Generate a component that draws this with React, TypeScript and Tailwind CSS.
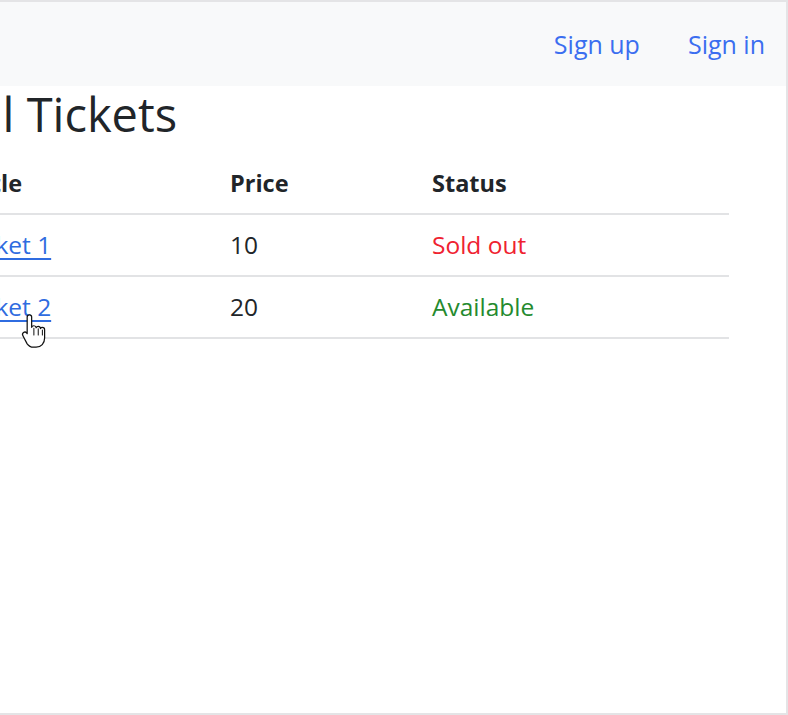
import React from 'react';

interface Ticket {
  title: string;
  price: number;
  soldOut: boolean;
}

const tickets: Ticket[] = [
  { title: 'Ticket 1', price: 10, soldOut: true },
  { title: 'Ticket 2', price: 20, soldOut: false },
];

const HandCursor = () => (
  <svg width="30" height="38" viewBox="0 0 26 34" className="absolute left-[20px] top-[310px]">
    <path
      d="M8 2.5c1.2 0 2 .9 2 2v9.2c.3-.9 1.1-1.4 2-1.4 1.1 0 1.9.8 2 1.8.3-.7 1-1.2 1.9-1.2 1.1 0 1.9.8 2 1.9.3-.6.9-1 1.7-1 1.2 0 2 .9 2 2v7.4c0 4.8-3.1 8.3-7.6 8.3h-2.4c-2.5 0-4.2-1-5.6-3L2.3 21.4c-.7-1-.5-2.3.4-3 .9-.7 2.2-.5 2.9.4L6 19.4V4.5c0-1.1.9-2 2-2z"
      fill="#fff"
      stroke="#111"
      strokeWidth="1.1"
      strokeLinejoin="round"
    />
    <path d="M12 14.5v6M15.9 15v5.5M19.6 16v4.5" stroke="#111" strokeWidth="0.9" strokeLinecap="round" />
  </svg>
);

const App = () => {
  return (
    <div
      className="relative w-[788px] h-[715px] overflow-hidden bg-white border-t-2 border-r-2 border-b-2 border-[#e4e4e6] text-[#212529]"
      style={{ fontFamily: '"Open Sans", "Noto Sans", sans-serif' }}
    >
      <nav className="h-[84px] bg-[#f8f9fa] flex items-center justify-end gap-[48px] pr-[21px]">
        <a className="text-[25px] text-[#3b6ef0] leading-[36px] cursor-pointer">Sign up</a>
        <a className="text-[25px] text-[#3b6ef0] leading-[36px] cursor-pointer">Sign in</a>
      </nav>

      <div className="ml-[-42px]">
        <h1 className="ml-[3px] text-[47px] leading-[56px] font-normal mt-0 mb-[11px]">All Tickets</h1>

        <table className="w-[771px] border-collapse text-[24.5px] leading-[36px] table-fixed">
          <colgroup>
            <col className="w-[260px]" />
            <col className="w-[202px]" />
            <col className="w-[309px]" />
          </colgroup>
          <thead>
            <tr className="border-b-2 border-[#e2e3e5]">
              <th className="text-left text-[23.5px] font-bold px-[12px] py-[12px]">Title</th>
              <th className="text-left text-[23.5px] font-bold px-[12px] py-[12px]">Price</th>
              <th className="text-left text-[23.5px] font-bold px-[12px] py-[12px]">Status</th>
            </tr>
          </thead>
          <tbody>
            {tickets.map((t) => (
              <tr key={t.title} className="border-b-2 border-[#e2e3e5]">
                <td className="pl-[6px] pr-[12px] py-[12px]">
                  <a className="text-[#2f6ce0] underline underline-offset-[4px] cursor-pointer">{t.title}</a>
                </td>
                <td className="px-[12px] py-[12px]">{t.price}</td>
                <td className={`px-[12px] py-[12px] ${t.soldOut ? 'text-[#ef2230]' : 'text-[#248a2e]'}`}>
                  {t.soldOut ? 'Sold out' : 'Available'}
                </td>
              </tr>
            ))}
          </tbody>
        </table>
      </div>

      <HandCursor />
    </div>
  );
};

export default App;
